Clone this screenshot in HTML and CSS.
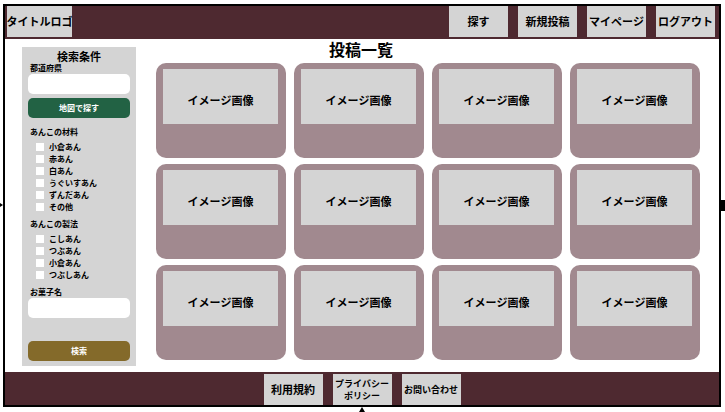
FILE: index.html
```html
<!DOCTYPE html>
<html lang="ja">
<head>
<meta charset="utf-8">
<meta name="viewport" content="width=device-width, initial-scale=1">
<title>投稿一覧</title>
<link rel="stylesheet" href="styles.css">
</head>
<body>
<div class="frame">
  <header class="bar header">
    <a class="tile logo" href="#">タイトルロゴ</a>
    <nav class="links">
      <a class="tile" href="#">探す</a>
      <a class="tile" href="#">新規投稿</a>
      <a class="tile" href="#">マイページ</a>
      <a class="tile" href="#">ログアウト</a>
    </nav>
  </header>
  <main class="main">
    <h1 class="page-title">投稿一覧</h1>
    <form class="search">
      <h2 class="search-title">検索条件</h2>
      <label class="label" for="pref">都道府県</label>
      <input class="field" id="pref" type="text">
      <button class="btn btn-map" type="button">地図で探す</button>
      <fieldset class="group group-first">
        <legend class="label">あんこの材料</legend>
        <label class="option"><input class="check" type="checkbox">小倉あん</label>
        <label class="option"><input class="check" type="checkbox">赤あん</label>
        <label class="option"><input class="check" type="checkbox">白あん</label>
        <label class="option"><input class="check" type="checkbox">うぐいすあん</label>
        <label class="option"><input class="check" type="checkbox">ずんだあん</label>
        <label class="option"><input class="check" type="checkbox">その他</label>
      </fieldset>
      <fieldset class="group">
        <legend class="label">あんこの製法</legend>
        <label class="option"><input class="check" type="checkbox">こしあん</label>
        <label class="option"><input class="check" type="checkbox">つぶあん</label>
        <label class="option"><input class="check" type="checkbox">小倉あん</label>
        <label class="option"><input class="check" type="checkbox">つぶしあん</label>
      </fieldset>
      <div class="group">
        <label class="label" for="sweet">お菓子名</label>
        <input class="field" id="sweet" type="text">
      </div>
      <button class="btn btn-search" type="submit">検索</button>
    </form>
    <section class="posts">
      <article class="card"><div class="thumb">イメージ画像</div></article>
      <article class="card"><div class="thumb">イメージ画像</div></article>
      <article class="card"><div class="thumb">イメージ画像</div></article>
      <article class="card"><div class="thumb">イメージ画像</div></article>
      <article class="card"><div class="thumb">イメージ画像</div></article>
      <article class="card"><div class="thumb">イメージ画像</div></article>
      <article class="card"><div class="thumb">イメージ画像</div></article>
      <article class="card"><div class="thumb">イメージ画像</div></article>
      <article class="card"><div class="thumb">イメージ画像</div></article>
      <article class="card"><div class="thumb">イメージ画像</div></article>
      <article class="card"><div class="thumb">イメージ画像</div></article>
      <article class="card"><div class="thumb">イメージ画像</div></article>
    </section>
  </main>
  <footer class="bar footer">
    <a class="tile" href="#">利用規約</a>
    <a class="tile tile-small" href="#">プライバシー<br>ポリシー</a>
    <a class="tile tile-small" href="#">お問い合わせ</a>
  </footer>
  <svg class="mark mark-left" viewBox="0 0 3 6" aria-hidden="true"><path d="M0 1L3 3L0 5Z"/></svg>
  <span class="mark mark-right"></span>
  <svg class="mark mark-bottom" viewBox="0 0 6 5" aria-hidden="true"><path d="M3 0L6 5H0Z"/></svg>
</div>
</body>
</html>
```
FILE: styles.css
```css
* {
  box-sizing: border-box;
}

body {
  min-height: 100vh;
  margin: 0;
  padding: 4px 4px 5px 3px;
  background: #fff;
  color: #000;
  font-family: "Noto Sans CJK JP", sans-serif;
  font-weight: 700;
  font-size: 11px;
  line-height: 12px;
}

.frame {
  position: relative;
  border: 2px solid #000;
}

.bar {
  display: flex;
  background: #4e2930;
}

.header {
  justify-content: space-between;
  padding: 0 4px 2px 2px;
}

.footer {
  justify-content: center;
  gap: 10px;
  padding-top: 2px;
}

.links {
  display: flex;
  gap: 10px;
}

.tile {
  display: flex;
  align-items: center;
  justify-content: center;
  width: 59px;
  height: 31px;
  padding-bottom: 2px;
  background: #d4d4d4;
  color: inherit;
  text-align: center;
  text-decoration: none;
  white-space: nowrap;
}

.logo {
  width: 65px;
}

.tile-small {
  padding-bottom: 0;
  font-size: 9px;
}

.main {
  display: grid;
  grid-template-columns: 114px 1fr;
  grid-template-rows: 24px auto;
  column-gap: 20px;
  padding: 0 19px 6px 17px;
}

.page-title {
  grid-area: 1 / 1 / 2 / 3;
  margin: 0;
  font-size: 16px;
  line-height: 20px;
  text-align: center;
}

.search {
  grid-area: 1 / 1 / 3 / 2;
  margin-top: 8px;
  padding: 3px 6px 5px;
  background: #d4d4d4;
}

.search-title {
  margin: 0;
  font-size: 11px;
  text-align: center;
}

.label {
  display: block;
  padding: 0 2px;
  font-size: 8px;
}

.field,
.btn {
  display: block;
  width: 100%;
  height: 20px;
  padding: 0 6px;
  border: 0;
  border-radius: 5px;
  font: inherit;
  font-size: 8px;
}

.field {
  background: #fff;
}

.btn {
  color: #fff;
}

.btn-map {
  margin-top: 4px;
  background: #226244;
}

.btn-search {
  margin-top: 23px;
  background: #846a2a;
}

.group {
  margin: 5px 0 0;
  padding: 0;
  border: 0;
}

.group-first {
  margin-top: 8px;
}

legend.label {
  margin-bottom: 3px;
}

.option {
  display: flex;
  align-items: center;
  gap: 5px;
  padding-left: 8px;
  font-size: 8px;
}

.check {
  appearance: none;
  width: 8px;
  height: 8px;
  margin: 0;
  background: #fff;
}

.check:checked {
  background: #226244;
}

.posts {
  grid-area: 2 / 2 / 3 / 3;
  display: grid;
  grid-template-columns: repeat(4, 1fr);
  grid-auto-rows: 95px;
  gap: 6px 8px;
  align-content: start;
}

.card {
  padding: 6px 8px 0 7px;
  border-radius: 10px;
  background: #a1898f;
}

.thumb {
  display: flex;
  align-items: center;
  justify-content: center;
  height: 55px;
  padding-top: 6px;
  background: #d4d4d4;
}

.mark {
  position: absolute;
}

.mark-left {
  top: 196px;
  left: -5px;
  width: 3px;
  height: 6px;
}

.mark-right {
  top: 194px;
  right: -6px;
  width: 4px;
  height: 11px;
  background: #000;
}

.mark-bottom {
  top: 100%;
  left: 50%;
  width: 6px;
  height: 5px;
  margin: 2px 0 0 -3px;
}
```
